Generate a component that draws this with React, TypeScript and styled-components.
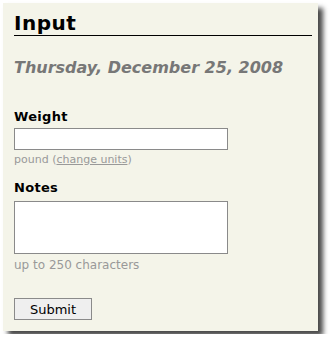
import * as React from "react";
import { FC } from "react";
import styled, { createGlobalStyle } from "styled-components";

const sans = `"DejaVu Sans", Verdana, sans-serif`;
const paper = "#f4f4e9";
const hint = "#999999";
const fieldBorder = "#8a8a8a";

const GlobalStyle = createGlobalStyle`
  html, body {
    margin: 0;
    padding: 0;
    background: #ffffff;
  }
  body {
    font-family: ${sans};
  }
`;

const Panel = styled.div`
  margin: 3px;
  width: 315px;
  height: 328px;
  box-sizing: border-box;
  padding: 9px 6px 11px 11px;
  background-color: ${paper};
  box-shadow: 5px 5px 5px rgba(0, 0, 0, 0.72);
`;

const Title = styled.h1`
  margin: 0;
  font-size: 20px;
  line-height: 23px;
  font-weight: bold;
  letter-spacing: 0.5px;
  color: #000;
  border-bottom: 1px solid #000;
`;

const DateLine = styled.h2`
  margin: 22px 0 0 0;
  font-size: 16px;
  line-height: 20px;
  font-weight: bold;
  font-style: italic;
  color: #777777;
`;

const Form = styled.form`
  margin-top: 31px;
`;

const Label = styled.label<{ $gap?: number }>`
  display: block;
  margin-top: ${(p) => p.$gap ?? 0}px;
  font-size: 13px;
  line-height: 16px;
  font-weight: bold;
  letter-spacing: 0.3px;
  color: #000;
`;

const TextInput = styled.input`
  display: block;
  margin: 3px 0 0 0;
  width: 214px;
  height: 22px;
  box-sizing: border-box;
  padding: 2px 3px;
  border: 1px solid ${fieldBorder};
  background: #fff;
  font-family: ${sans};
  font-size: 13px;
  outline: none;
`;

const TextArea = styled.textarea`
  display: block;
  margin: 5px 0 0 0;
  width: 214px;
  height: 53px;
  box-sizing: border-box;
  padding: 2px 3px;
  border: 1px solid ${fieldBorder};
  background: #fff;
  font-family: ${sans};
  font-size: 13px;
  resize: none;
  outline: none;
`;

const Hint = styled.div<{ $gap: number; $size: number }>`
  margin-top: ${(p) => p.$gap}px;
  font-size: ${(p) => p.$size}px;
  line-height: ${(p) => p.$size + 3}px;
  color: ${hint};
`;

const HintLink = styled.a`
  color: ${hint};
  text-decoration: underline;
`;

const SubmitButton = styled.button`
  display: block;
  margin-top: 25px;
  width: 78px;
  height: 22px;
  padding: 0;
  border: 1px solid ${fieldBorder};
  border-radius: 0;
  background-color: #efefef;
  font-family: ${sans};
  font-size: 13px;
  color: #000;
`;

const App: FC = () => {
  return (
    <>
      <GlobalStyle />
      <Panel>
        <Title>Input</Title>
        <DateLine>Thursday, December 25, 2008</DateLine>
        <Form onSubmit={(e) => e.preventDefault()}>
          <Label htmlFor="weight">Weight</Label>
          <TextInput id="weight" type="text" />
          <Hint $gap={3} $size={11}>
            pound (<HintLink href="#">change units</HintLink>)
          </Hint>
          <Label htmlFor="notes" $gap={13}>
            Notes
          </Label>
          <TextArea id="notes" />
          <Hint $gap={4} $size={12}>
            up to 250 characters
          </Hint>
          <SubmitButton type="submit">Submit</SubmitButton>
        </Form>
      </Panel>
    </>
  );
};

export default App;
